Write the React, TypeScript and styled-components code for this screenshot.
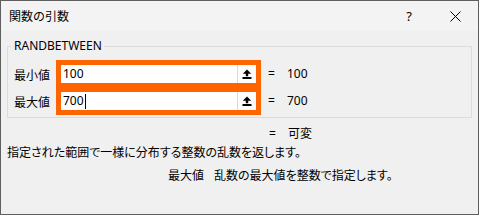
import styled, { createGlobalStyle } from "styled-components"

const GlobalStyle = createGlobalStyle`
  html, body {
    margin: 0;
    padding: 0;
    background: #f0f0f0;
  }
  body {
    font-family: "Noto Sans", "Noto Sans CJK JP", sans-serif;
    font-size: 12px;
    color: #000;
  }
`

const Window = styled.div`
  width: 479px;
  height: 215px;
  box-sizing: border-box;
  border: 1px solid #5f5f5f;
  background: #f0f0f0;
  display: flex;
  flex-direction: column;
  overflow: hidden;
`

const TitleBar = styled.div`
  height: 30px;
  flex: none;
  background: #f3f3f3;
  display: flex;
  align-items: center;
  padding-left: 8px;
`

const Title = styled.div`
  flex: 1;
  font-family: "Noto Sans CJK JP", sans-serif;
  font-size: 12px;
  padding-bottom: 1px;
`

const TitleButton = styled.div<{ $width: number }>`
  width: ${(p) => p.$width}px;
  height: 30px;
  display: flex;
  align-items: center;
  justify-content: center;
  font-size: 13px;
`

const Body = styled.div`
  flex: 1;
  padding: 0 6px;
  display: flex;
  flex-direction: column;
`

const GroupBox = styled.fieldset`
  margin: 7px 0 0 0;
  padding: 6px 6px 2px 6px;
  border: 1px solid #dcdcdc;
  display: flex;
  flex-direction: column;
`

const Legend = styled.legend`
  padding: 0 2px 0 3px;
  margin-left: -3px;
  line-height: 16px;
  font-family: "Noto Sans", sans-serif;
  font-size: 12px;
`

const ArgRow = styled.div<{ $first?: boolean }>`
  display: flex;
  align-items: center;
  margin-top: ${(p) => (p.$first ? 0 : -1)}px;
`

const ArgLabel = styled.div`
  width: 42px;
  font-family: "Noto Sans CJK JP", sans-serif;
`

const Highlight = styled.div`
  border: 5px solid #fe6500;
  display: flex;
`

const InputBox = styled.div`
  width: 195px;
  height: 18px;
  background: #fff;
  display: flex;
  align-items: center;
`

const InputText = styled.div`
  flex: 1;
  padding-left: 2px;
  display: flex;
  align-items: center;
  line-height: 18px;
`

const Caret = styled.span`
  display: inline-block;
  width: 1px;
  height: 15px;
  background: #000;
  margin-left: 1px;
`

const CollapseButton = styled.div`
  width: 19px;
  height: 18px;
  box-sizing: border-box;
  border-left: 1px solid #dadada;
  background: #fdfdfd;
  display: flex;
  align-items: center;
  justify-content: center;
`

const Result = styled.div<{ $indent: number; $top?: number }>`
  display: flex;
  align-items: center;
  margin-left: ${(p) => p.$indent}px;
  margin-top: ${(p) => p.$top ?? 0}px;
  line-height: 16px;
`

const Equals = styled.span`
  width: 19px;
`

const Value = styled.span`
  font-family: "Noto Sans", "Noto Sans CJK JP", sans-serif;
`

const Description = styled.div`
  margin-top: 2px;
  line-height: 16px;
  font-family: "Noto Sans CJK JP", sans-serif;
  font-feature-settings: "palt";
`

const HelpRow = styled.div`
  display: flex;
  margin-top: 7px;
  margin-left: 161px;
  line-height: 16px;
  font-family: "Noto Sans CJK JP", sans-serif;
  font-feature-settings: "palt";
`

const HelpName = styled.span`
  width: 46px;
  font-feature-settings: normal;
`

const UpArrow = () => (
  <svg width="10" height="10" viewBox="0 0 10 10">
    <path d="M5 0.5 L0.8 4.8 H3.8 V7.2 H6.2 V4.8 H9.2 Z" fill="#000" />
    <rect x="0.5" y="8" width="9" height="2" fill="#000" />
  </svg>
)

const CloseIcon = () => (
  <svg width="11" height="11" viewBox="0 0 11 11">
    <path d="M0.5 0.5 L10.5 10.5 M10.5 0.5 L0.5 10.5" stroke="#000" strokeWidth="1" />
  </svg>
)

const args = [
  { name: "最小値", value: "100", result: "100" },
  { name: "最大値", value: "700", result: "700", focused: true },
]

const App = () => {
  return (
    <>
      <GlobalStyle />
      <Window>
        <TitleBar>
          <Title>関数の引数</Title>
          <TitleButton $width={46}>?</TitleButton>
          <TitleButton $width={46}>
            <CloseIcon />
          </TitleButton>
        </TitleBar>
        <Body>
          <GroupBox>
            <Legend>RANDBETWEEN</Legend>
            {args.map((arg, i) => (
              <ArgRow key={arg.name} $first={i === 0}>
                <ArgLabel>{arg.name}</ArgLabel>
                <Highlight>
                  <InputBox>
                    <InputText>
                      {arg.value}
                      {arg.focused && <Caret />}
                    </InputText>
                    <CollapseButton>
                      <UpArrow />
                    </CollapseButton>
                  </InputBox>
                </Highlight>
                <Result $indent={7}>
                  <Equals>=</Equals>
                  <Value>{arg.result}</Value>
                </Result>
              </ArgRow>
            ))}
          </GroupBox>
          <Result $indent={262} $top={8}>
            <Equals>=</Equals>
            <Value>可変</Value>
          </Result>
          <Description>指定された範囲で一様に分布する整数の乱数を返します。</Description>
          <HelpRow>
            <HelpName>最大値</HelpName>
            <span>乱数の最大値を整数で指定します。</span>
          </HelpRow>
        </Body>
      </Window>
    </>
  )
}

export default App
